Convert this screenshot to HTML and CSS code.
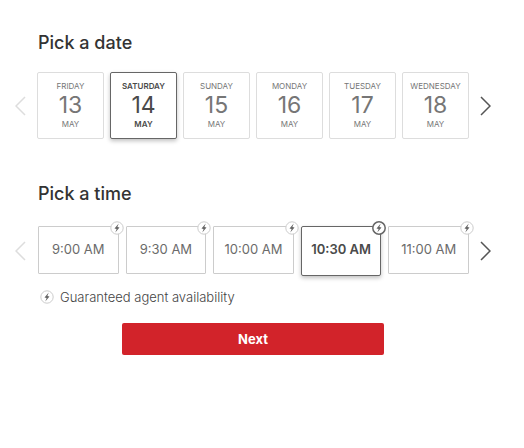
FILE: index.html
```html
<!DOCTYPE html>
<html lang="en">
<head>
  <meta charset="UTF-8">
  <title>Schedule a tour</title>
  <link rel="stylesheet" href="styles.css">
</head>
<body>

  <svg class="sprite" aria-hidden="true">
    <symbol id="bolt" viewBox="0 0 14 14">
      <circle class="ring" cx="7" cy="7" r="6.2"/>
      <path class="flash" d="M8.7 2.6 4.5 7.5l2.1.4-1.3 3.5 4.2-4.9-2.1-.4z"/>
    </symbol>
    <symbol id="prev" viewBox="0 0 11 20">
      <path d="M10 1 1 10l9 9"/>
    </symbol>
    <symbol id="next" viewBox="0 0 11 20">
      <path d="m1 1 9 9-9 9"/>
    </symbol>
  </svg>

  <main>
    <section>
      <h2>Pick a date</h2>
      <div class="picker">
        <button class="arrow" aria-label="Previous dates" disabled><svg><use href="#prev"/></svg></button>
        <div class="dates">
          <button class="date"><span>FRIDAY</span><span class="day">13</span><span>MAY</span></button>
          <button class="date selected" aria-pressed="true"><span>SATURDAY</span><span class="day">14</span><span>MAY</span></button>
          <button class="date"><span>SUNDAY</span><span class="day">15</span><span>MAY</span></button>
          <button class="date"><span>MONDAY</span><span class="day">16</span><span>MAY</span></button>
          <button class="date"><span>TUESDAY</span><span class="day">17</span><span>MAY</span></button>
          <button class="date"><span>WEDNESDAY</span><span class="day">18</span><span>MAY</span></button>
        </div>
        <button class="arrow" aria-label="Next dates"><svg><use href="#next"/></svg></button>
      </div>
    </section>

    <section>
      <h2>Pick a time</h2>
      <div class="picker">
        <button class="arrow" aria-label="Earlier times" disabled><svg><use href="#prev"/></svg></button>
        <div class="times">
          <button class="time">9:00 AM<svg class="bolt"><use href="#bolt"/></svg></button>
          <button class="time">9:30 AM<svg class="bolt"><use href="#bolt"/></svg></button>
          <button class="time">10:00 AM<svg class="bolt"><use href="#bolt"/></svg></button>
          <button class="time selected" aria-pressed="true">10:30 AM<svg class="bolt"><use href="#bolt"/></svg></button>
          <button class="time">11:00 AM<svg class="bolt"><use href="#bolt"/></svg></button>
        </div>
        <button class="arrow" aria-label="Later times"><svg><use href="#next"/></svg></button>
      </div>
      <p class="legend"><svg class="bolt"><use href="#bolt"/></svg>Guaranteed agent availability</p>
    </section>

    <button class="submit">Next</button>
  </main>

</body>
</html>
```

FILE: styles.css
```css
* {
  box-sizing: border-box;
}
body {
  margin: 0;
  background: #fff;
  color: #333;
  font-family: Inter, "Liberation Sans", sans-serif;
}
button {
  font-family: inherit;
  margin: 0;
  padding: 0;
  cursor: pointer;
}
.sprite {
  position: absolute;
  width: 0;
  height: 0;
}
main {
  padding: 31px 33px 32px 15px;
}
h2 {
  margin: 0 0 17px 23px;
  font-size: 18px;
  line-height: 24px;
  font-weight: 500;
}
section + section {
  margin-top: 43px;
}
section + section h2 {
  margin-bottom: 20px;
}
.picker {
  display: grid;
  grid-template-columns: 11px 1fr 11px;
  gap: 11px;
  align-items: center;
}
.arrow {
  height: 20px;
  border: 0;
  background: none;
  color: #555;
}
.arrow:disabled {
  color: #ddd;
  cursor: default;
}
.arrow svg {
  display: block;
  width: 11px;
  height: 20px;
  fill: none;
  stroke: currentColor;
  stroke-width: 1.5;
}
.dates {
  display: grid;
  grid-template-columns: repeat(6, 1fr);
  gap: 6px;
}
.date {
  display: flex;
  flex-direction: column;
  align-items: center;
  padding: 7px 0 8px;
  border: 1px solid #ddd;
  border-radius: 2px;
  background: #fff;
  color: #767676;
  font-size: 8px;
  line-height: 12px;
}
.day {
  font-size: 23px;
  line-height: 26px;
  font-weight: 400;
}
.times {
  display: grid;
  grid-template-columns: repeat(5, 1fr);
  align-items: start;
  gap: 7px;
  height: 50px;
  padding-left: 1px;
}
.time {
  position: relative;
  height: 48px;
  padding-bottom: 2px;
  border: 1px solid #ccc;
  border-radius: 1px;
  background: #fff;
  color: #6b6b6b;
  font-size: 13px;
}
.selected {
  border-color: #666;
  border-radius: 2px;
  color: #4a4a4a;
  font-weight: 600;
  box-shadow: 0 2px 4px rgba(0, 0, 0, 0.25);
}
.time.selected {
  height: 50px;
  padding-bottom: 4px;
}
.bolt {
  width: 14px;
  height: 14px;
  fill: #666;
  stroke: #ccc;
}
.time .bolt {
  position: absolute;
  top: -6px;
  right: -6px;
}
.selected .bolt {
  stroke: #666;
  stroke-width: 1.5;
}
.ring {
  fill: #fff;
}
.flash {
  stroke: none;
}
.legend {
  display: flex;
  align-items: center;
  gap: 6px;
  margin: 12px 0 0 25px;
  color: #444;
  font-size: 13px;
  font-weight: 300;
  line-height: 18px;
}
.submit {
  display: block;
  width: 55%;
  height: 32px;
  margin: 17px auto 0;
  border: 0;
  border-radius: 2px;
  background: #d2232a;
  color: #fff;
  font-size: 13px;
  font-weight: 700;
}
```
